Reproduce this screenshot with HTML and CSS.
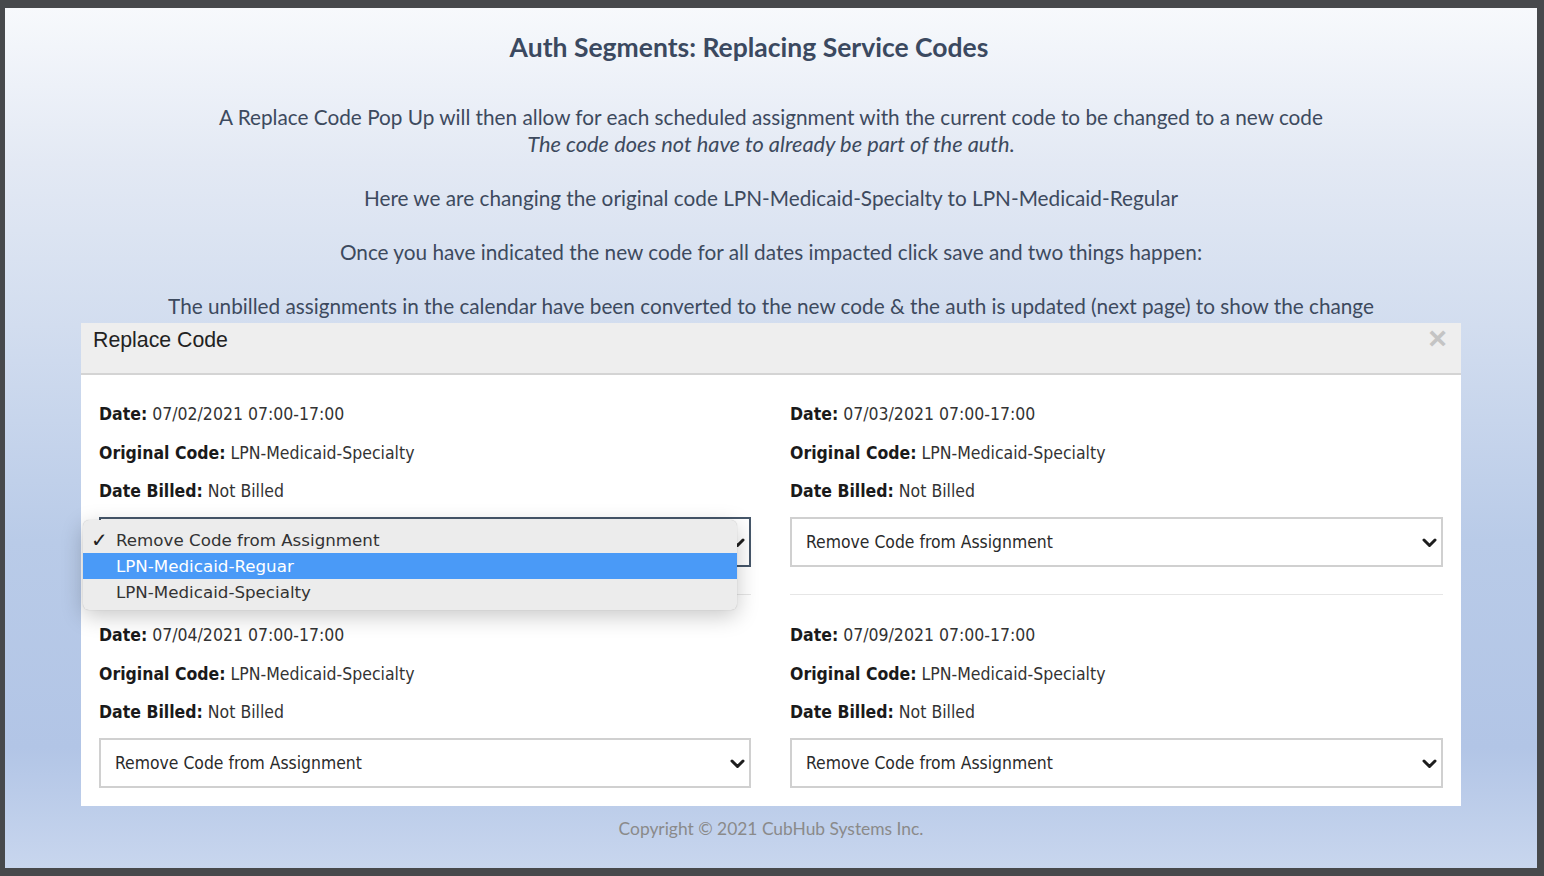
FILE: index.html
```html
<!DOCTYPE html>
<html lang="en">
<head>
<meta charset="utf-8">
<title>Auth Segments: Replacing Service Codes</title>
<link rel="stylesheet" href="styles.css">
</head>
<body>
<div class="page">
  <h1 class="title">Auth Segments: Replacing Service Codes</h1>
  <div class="intro">
    <p>A Replace Code Pop Up will then allow for each scheduled assignment with the current code to be changed to a new code<br><em>The code does not have to already be part of the auth.</em></p>
    <p>Here we are changing the original code LPN-Medicaid-Specialty to LPN-Medicaid-Regular</p>
    <p>Once you have indicated the new code for all dates impacted click save and two things happen:</p>
    <p>The unbilled assignments in the calendar have been converted to the new code &amp; the auth is updated (next page) to show the change</p>
  </div>

  <div class="modal">
    <div class="modal-header">
      <span class="modal-title">Replace Code</span>
      <span class="close">&times;</span>
    </div>
    <div class="modal-body">
      <div class="item top">
        <div class="field"><b>Date:</b> 07/02/2021 07:00-17:00</div>
        <div class="field"><b>Original Code:</b> LPN-Medicaid-Specialty</div>
        <div class="field"><b>Date Billed:</b> Not Billed</div>
        <div class="select focused">
          <span class="select-text">Remove Code from Assignment</span>
          <svg class="chev" width="15" height="10" viewBox="0 0 15 10"><polyline points="2,2 7.5,7.5 13,2" fill="none" stroke="#1e1e1e" stroke-width="3" stroke-linecap="round" stroke-linejoin="round"/></svg>
          <div class="menu">
            <div class="opt"><span class="check">&#10003;</span>Remove Code from Assignment</div>
            <div class="opt active">LPN-Medicaid-Reguar</div>
            <div class="opt">LPN-Medicaid-Specialty</div>
          </div>
        </div>
      </div>
      <div class="item top">
        <div class="field"><b>Date:</b> 07/03/2021 07:00-17:00</div>
        <div class="field"><b>Original Code:</b> LPN-Medicaid-Specialty</div>
        <div class="field"><b>Date Billed:</b> Not Billed</div>
        <div class="select">
          <span class="select-text">Remove Code from Assignment</span>
          <svg class="chev" width="15" height="10" viewBox="0 0 15 10"><polyline points="2,2 7.5,7.5 13,2" fill="none" stroke="#1e1e1e" stroke-width="3" stroke-linecap="round" stroke-linejoin="round"/></svg>
        </div>
      </div>
      <div class="item bottom">
        <div class="field"><b>Date:</b> 07/04/2021 07:00-17:00</div>
        <div class="field"><b>Original Code:</b> LPN-Medicaid-Specialty</div>
        <div class="field"><b>Date Billed:</b> Not Billed</div>
        <div class="select">
          <span class="select-text">Remove Code from Assignment</span>
          <svg class="chev" width="15" height="10" viewBox="0 0 15 10"><polyline points="2,2 7.5,7.5 13,2" fill="none" stroke="#1e1e1e" stroke-width="3" stroke-linecap="round" stroke-linejoin="round"/></svg>
        </div>
      </div>
      <div class="item bottom">
        <div class="field"><b>Date:</b> 07/09/2021 07:00-17:00</div>
        <div class="field"><b>Original Code:</b> LPN-Medicaid-Specialty</div>
        <div class="field"><b>Date Billed:</b> Not Billed</div>
        <div class="select">
          <span class="select-text">Remove Code from Assignment</span>
          <svg class="chev" width="15" height="10" viewBox="0 0 15 10"><polyline points="2,2 7.5,7.5 13,2" fill="none" stroke="#1e1e1e" stroke-width="3" stroke-linecap="round" stroke-linejoin="round"/></svg>
        </div>
      </div>
    </div>
  </div>

  <footer class="copyright">Copyright &copy; 2021 CubHub Systems Inc.</footer>
</div>
</body>
</html>
```

FILE: styles.css
```css
* { box-sizing: border-box; }

html, body {
  margin: 0;
  padding: 0;
}

body {
  background: #47494c;
  width: 1544px;
  height: 876px;
  overflow: hidden;
  padding: 8px 7px 8px 5px;
}

.page {
  width: 1532px;
  height: 860px;
  background: linear-gradient(to bottom, #f7f9fc 0%, #e3e9f4 18%, #d2ddef 37%, #b9cbe8 62%, #b2c5e6 86%, #c8d6ee 100%);
  font-family: Lato, "Open Sans", sans-serif;
  color: #3d4a5e;
  display: flex;
  flex-direction: column;
  align-items: center;
  padding-top: 24px;
}

.title {
  margin: 0;
  font-size: 26.5px;
  line-height: 30px;
  font-weight: 700;
  color: #3b4960;
  padding-right: 44px;
}

.intro {
  margin-top: 42px;
  text-align: center;
  font-size: 20.75px;
  line-height: 27px;
}

.intro em {
  font-size: 21.8px;
  line-height: 0;
}

.intro p {
  margin: 0 0 27px 0;
}

.intro p:last-child {
  margin-bottom: 0;
}

.modal {
  margin-top: 3px;
  width: 1380px;
  background: #ffffff;
  font-family: "DejaVu Sans Condensed", "DejaVu Sans", sans-serif;
  color: #333;
}

.modal-header {
  height: 52px;
  background: #eeeeee;
  border-bottom: 2px solid #d4d4d4;
  display: flex;
  justify-content: space-between;
  align-items: flex-start;
  padding: 6px 14px 0 12px;
}

.modal-title {
  font-family: "Liberation Sans", Arial, sans-serif;
  font-size: 21.3px;
  line-height: 22px;
  color: #222;
}

.close {
  font-family: "Liberation Sans", Arial, sans-serif;
  font-size: 32px;
  line-height: 18px;
  font-weight: 700;
  color: #c4c4c4;
}

.modal-body {
  display: grid;
  grid-template-columns: 652px 653px;
  column-gap: 39px;
  padding: 20px 18px 18px 18px;
}

.item.top {
  padding-bottom: 27px;
  border-bottom: 1px solid #e6e6e6;
}

.item.bottom {
  padding-top: 21px;
}

.field {
  height: 38.5px;
  line-height: 38.5px;
  font-size: 17.5px;
  color: #333;
  white-space: nowrap;
}

.field b {
  color: #1a1a1a;
}

.select {
  position: relative;
  margin-top: 6.5px;
  height: 50px;
  border: 2px solid #d0d0d0;
  display: flex;
  align-items: center;
  justify-content: space-between;
  padding: 0 4px 0 14px;
  font-size: 17.4px;
  color: #2a2a2a;
}

.select.focused {
  border-color: #46576a;
}

.select.focused .select-text {
  visibility: hidden;
}

.chev {
  display: block;
  margin-top: 2px;
}

.menu {
  position: absolute;
  left: -18px;
  top: 1px;
  width: 654px;
  height: 90px;
  background: #ececec;
  border-radius: 6px;
  box-shadow: 0 6px 22px rgba(0, 0, 0, 0.22), 0 0 1px rgba(0, 0, 0, 0.25);
  padding-top: 7px;
  font-family: "DejaVu Sans", sans-serif;
  font-size: 16.7px;
  color: #333;
  z-index: 5;
}

.opt {
  position: relative;
  height: 26px;
  line-height: 26px;
  padding-left: 33px;
  white-space: nowrap;
}

.opt.active {
  background: #4a9af7;
  color: #ffffff;
}

.check {
  position: absolute;
  left: 8px;
  top: 0;
  font-size: 20px;
  font-weight: 700;
  color: #222;
}

.copyright {
  margin-top: 13px;
  font-size: 17.4px;
  line-height: 20px;
  color: #8a8a8a;
}
```
